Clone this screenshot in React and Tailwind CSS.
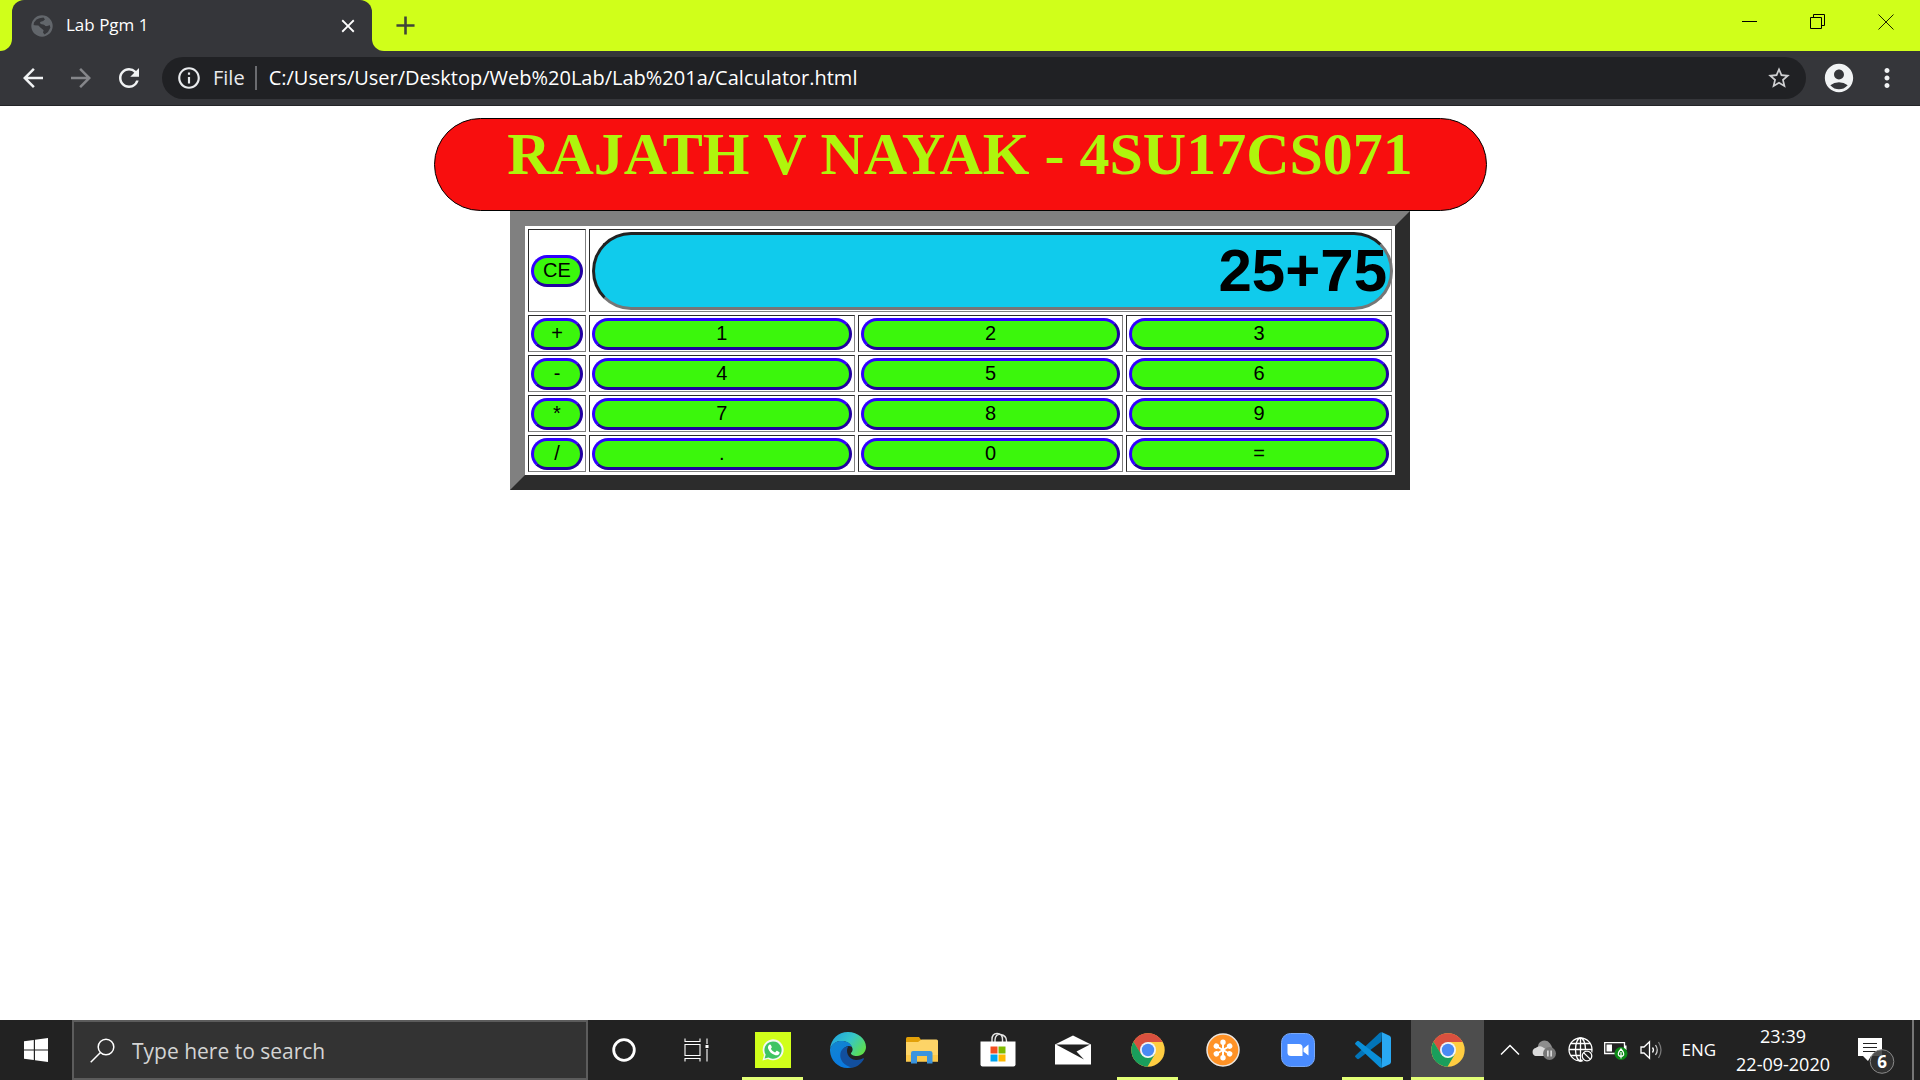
import { useState } from "react";
import {
  MdAccountCircle,
  MdAdd,
  MdArrowBack,
  MdArrowForward,
  MdClose,
  MdInfoOutline,
  MdMoreVert,
  MdRefresh,
  MdStarBorder,
} from "react-icons/md";

function GlobeIcon() {
  return (
    <svg width="22" height="22" viewBox="0 0 22 22" aria-hidden="true">
      <circle cx="11" cy="11" r="10.7" fill="#62666b" />
      <path
        d="M8.5 3.2 12.5 2.4 14 4.5 12 6.2 9.5 7 9.8 9 12.8 9.4 15 11 18.6 10 19.4 12.5 17 17 13.5 19.4 12 17.4 12.6 15.2 10.6 13.6 6.5 13 2.6 10 3 7.6 5.5 4.6Z"
        fill="#35363a"
      />
      <path d="M9 7 12 6.4 14.6 4 18 7.4 18.8 10 15 11.2 12.6 9.3 9.8 9Z" fill="#62666b" />
      <path d="M2.4 10.2 7.4 10.6 10.4 13.4 10 16 8.2 19.4 4.4 17 2.2 13Z" fill="#62666b" />
    </svg>
  );
}

function WindowControls() {
  return (
    <div className="ml-auto flex h-[43px]">
      <button aria-label="Minimize" className="flex w-[68px] items-center justify-center">
        <svg width="16" height="16" viewBox="0 0 16 16">
          <path d="M0 7.5H15" stroke="#000" strokeWidth="1" />
        </svg>
      </button>
      <button aria-label="Restore" className="flex w-[68px] items-center justify-center">
        <svg width="16" height="16" viewBox="0 0 16 16" fill="none" stroke="#000">
          <path d="M.5 3.500H11.500V14.500H.5ZM3.500 3.500V.5H14.500V11.500H11.500" />
        </svg>
      </button>
      <button aria-label="Close window" className="flex w-[68px] items-center justify-center">
        <svg width="16" height="16" viewBox="0 0 16 16">
          <path d="M.5.5 15.500 15.500M15.500.5.5 15.500" stroke="#1c2200" strokeWidth="1" />
        </svg>
      </button>
    </div>
  );
}

function BrowserChrome() {
  return (
    <header className="bg-[#35363a] font-['Open_Sans','Noto_Sans',sans-serif]">
      <div className="flex h-[51px]">
        <div className="w-3 rounded-br-xl bg-[#d0ff1a]" />
        <div className="w-[360px] bg-[#d0ff1a]">
          <div className="flex h-full items-center rounded-t-xl bg-[#35363a] pr-[13px] pl-[19px] text-white">
            <GlobeIcon />
            <span className="ml-[13px] flex-1 pb-0.5 text-[17px]">Lab Pgm 1</span>
            <button aria-label="Close tab">
              <MdClose size={22} />
            </button>
          </div>
        </div>
        <div className="flex flex-1 rounded-bl-xl bg-[#d0ff1a]">
          <button aria-label="New tab" className="ml-[18px] text-[#3f4538]">
            <MdAdd size={31} />
          </button>
          <WindowControls />
        </div>
      </div>
      <div className="flex h-[55px] items-center border-b border-[#232427] pb-px text-[#f1f3f4]">
        <nav className="flex w-[162px] items-center pl-[18px]">
          <button aria-label="Back">
            <MdArrowBack size={30} />
          </button>
          <button aria-label="Forward" className="ml-[18px] text-[#85868a]">
            <MdArrowForward size={30} />
          </button>
          <button aria-label="Reload" className="ml-[18px]">
            <MdRefresh size={30} />
          </button>
        </nav>
        <div className="flex h-[42px] flex-1 items-center rounded-full bg-[#202124] pr-3.5 pl-[14px]">
          <MdInfoOutline size={26} className="text-[#e8eaed]" />
          <label htmlFor="address" className="ml-[11px] text-[20px] text-[#e8eaed]">
            File
          </label>
          <span className="ml-2.5 h-6 w-0.5 bg-[#6b6c70]" />
          <input
            id="address"
            type="text"
            defaultValue="C:/Users/User/Desktop/Web%20Lab/Lab%201a/Calculator.html"
            className="ml-3 min-w-0 flex-1 bg-transparent text-[20px] text-white outline-none"
          />
          <button aria-label="Bookmark this page" className="text-[#cfd0d2]">
            <MdStarBorder size={26} />
          </button>
        </div>
        <button aria-label="Profile" className="ml-4">
          <MdAccountCircle size={34} />
        </button>
        <button aria-label="Menu" className="mr-[18px] ml-4">
          <MdMoreVert size={30} />
        </button>
      </div>
    </header>
  );
}

const keyRows = [
  ["+", "1", "2", "3"],
  ["-", "4", "5", "6"],
  ["*", "7", "8", "9"],
  ["/", ".", "0", "="],
];

const cell =
  "border border-t-[#2c2c2c] border-l-[#2c2c2c] border-r-[#808080] border-b-[#808080] p-[2px] pb-px";

function Key({ label, onPress }) {
  return (
    <button
      onClick={() => onPress(label)}
      className="block h-8 w-full rounded-2xl border-3 border-t-[#3000ff] border-r-[#2000a0] border-b-[#2000a0] border-l-[#3000ff] bg-[#3bf70c] pb-0.5 text-[20px] leading-[24px] text-black"
    >
      {label}
    </button>
  );
}

function Calculator() {
  const [value, setValue] = useState("25+75");
  const press = (label) => {
    if (label === "CE") setValue("");
    else if (label !== "=") setValue(value + label);
  };
  return (
    <main className="flex flex-1 flex-col items-center bg-white pt-3">
      <h1 className="h-[93px] w-full max-w-[1053px] rounded-full border border-black bg-[#f80e0e] text-center font-['Liberation_Serif',serif] text-[60px] leading-[71px] font-bold text-[#aff50c]">
        RAJATH V NAYAK - 4SU17CS071
      </h1>
      <table className="w-full max-w-[900px] table-fixed border-separate border-spacing-[3px] border-[15px] border-t-[#808080] border-r-[#2c2c2c] border-b-[#2c2c2c] border-l-[#808080] font-['Liberation_Sans',sans-serif]">
        <colgroup>
          <col className="w-[58px]" />
          <col />
          <col />
          <col />
        </colgroup>
        <tbody>
          <tr>
            <td className={cell}>
              <Key label="CE" onPress={press} />
            </td>
            <td colSpan={3} className={cell}>
              <input
                type="text"
                aria-label="Result"
                readOnly
                value={value}
                className="block h-[78px] w-[calc(100%+4px)] rounded-full border-3 border-t-[#222222] border-r-[#767676] border-b-[#767676] border-l-[#222222] bg-[#10cbec] pr-[3px] pb-0.5 text-right text-[60px] leading-[69px] font-bold text-black outline-none"
              />
            </td>
          </tr>
          {keyRows.map((row) => (
            <tr key={row[0]}>
              {row.map((label) => (
                <td key={label} className={cell}>
                  <Key label={label} onPress={press} />
                </td>
              ))}
            </tr>
          ))}
        </tbody>
      </table>
    </main>
  );
}

function WhatsAppIcon() {
  return (
    <svg width="36" height="36" viewBox="0 0 36 36">
      <rect width="36" height="36" fill="#d0ff1a" />
      <path d="M7.500 28.500 9 23A10.500 10.500 0 1 1 13 27Z" fill="#f4f7f2" />
      <path d="M9.600 26.500 10.700 22.600A8.600 8.600 0 1 1 13.500 25.400Z" fill="#3fc463" />
      <path
        d="M14.300 12.800c.7-.5 1.400-.3 1.700.4l.8 1.800c.1.400 0 .7-.9 1.700.9 1.800 2.300 3 4.200 3.700l1.300-1.300c.3-.3.600-.3 1-.1l1.700.9c.6.300.6.700.3 1.500-.7 1.700-2.700 2.200-4.500 1.600-3.200-1-5.600-3.300-6.700-6.300-.5-1.700 0-3 1.100-3.900Z"
        fill="#fff"
      />
    </svg>
  );
}

function EdgeIcon() {
  return (
    <svg width="36" height="36" viewBox="0 0 36 36">
      <defs>
        <linearGradient id="edgeTop" x1="0" y1=".2" x2="1" y2=".7">
          <stop offset="0" stopColor="#1fa3e0" />
          <stop offset=".5" stopColor="#36c6c8" />
          <stop offset="1" stopColor="#5fdf4a" />
        </linearGradient>
        <linearGradient id="edgeSide" x1="0" y1="0" x2=".4" y2="1">
          <stop offset="0" stopColor="#1286cf" />
          <stop offset="1" stopColor="#0a7ae0" />
        </linearGradient>
      </defs>
      <path
        d="M0 17C1 7 8 0 18 0s18 7 18 15c0 5-4 9-9 9-4 0-6.500-1.500-6-3 1.500-1.500 1.800-3 1.500-4.500C21.500 12 17 9 11.500 9 6 9 2 12 0 17Z"
        fill="url(#edgeTop)"
      />
      <path
        d="M0 17C2 11.500 6 9 11.500 9c5 0 9 2 10.500 6-3-2-7-.8-9 2.500-3 6 .5 14.500 9.500 17.800C10 38.500-.5 29 0 17Z"
        fill="url(#edgeSide)"
      />
      <path
        d="M18.500 14.500C15 18 17.500 27.500 26 28c3 .1 5-.6 7-1.700.8-.3 1.200.3.8 1C31 32 27 35 22.500 35.700 14 34 9 27.500 10.500 21c1-4 4.500-6.500 8-6.500Z"
        fill="#124f9e"
      />
    </svg>
  );
}

function FolderIcon() {
  return (
    <svg width="33" height="27" viewBox="0 0 33 27">
      <path d="M0 1.500Q0 0 1.500 0H13L15.500 3.500 13 6H0Z" fill="#e2a008" />
      <path d="M0 5H12L15.500 2.500H30.500Q32 2.500 32 4V24.500H0Z" fill="#fdd467" />
      <path d="M0 18H32V24.500H0Z" fill="#fcc848" />
      <path d="M5 26.500V16Q5 14 7 14H24Q26.500 14 26.500 16V26.500H21V19H11V26.500Z" fill="#3b94de" />
    </svg>
  );
}

function StoreIcon() {
  return (
    <svg width="36" height="36" viewBox="0 0 36 36">
      <path
        d="M12 11V7.500C12 3.500 14 1.500 17 1.500S22.500 3.500 22.500 7.500V11M15 11V8C15 4 17.500 2 20.500 2.500S26.500 4.500 26.500 9V11"
        fill="none"
        stroke="#e4e4e4"
        strokeWidth="1.400"
      />
      <path d="M.5 9.500H35.500V32.500Q35.500 34.500 33.500 34.500H2.500Q.5 34.500.5 32.500Z" fill="#fff" />
      <path d="M10.500 14.500H17.500V21.500H10.500Z" fill="#f25022" />
      <path d="M18.500 14.500H25.500V21.500H18.500Z" fill="#7fba00" />
      <path d="M10.500 22.500H17.500V29.500H10.500Z" fill="#00a4ef" />
      <path d="M18.500 22.500H25.500V29.500H18.500Z" fill="#ffb900" />
    </svg>
  );
}

function MailIcon() {
  return (
    <svg width="36" height="30" viewBox="0 0 36 30">
      <path d="M0 9.500 18 .5 36 9.500V29.500H0Z" fill="#fff" />
      <path d="M1 9.500H35L21.500 16.500 29 24.500Z" fill="#222" />
    </svg>
  );
}

function ChromeIcon() {
  return (
    <svg width="34" height="34" viewBox="0 0 34 34">
      <circle cx="17" cy="17" r="16.700" fill="#ffcd41" />
      <path d="M2.500 8.700A16.700 16.700 0 0 1 31.600 9H17L9.800 21.200Z" fill="#d9503f" />
      <path d="M2.500 8.700A16.700 16.700 0 0 0 16.500 33.700L24 21 17 25 10 21.100Z" fill="#1a9e5c" />
      <circle cx="17" cy="17" r="8" fill="#f1f4f8" />
      <circle cx="17" cy="17" r="6.200" fill="#4a8af4" />
    </svg>
  );
}

function AsteriskIcon() {
  return (
    <svg width="34" height="34" viewBox="0 0 34 34">
      <circle cx="17" cy="17" r="16" fill="#ff9226" stroke="#ece6e0" strokeWidth="1.500" />
      <g fill="#fff" stroke="#fff" strokeWidth="2">
        {[0, 60, 120, 180, 240, 300].map((angle) => (
          <g key={angle} transform={`rotate(${angle} 17 17)`}>
            <path d="M17 17V9" />
            <circle cx="17" cy="9.300" r="1.700" />
          </g>
        ))}
      </g>
    </svg>
  );
}

function ZoomIcon() {
  return (
    <svg width="34" height="34" viewBox="0 0 34 34">
      <rect x=".5" y=".5" width="33" height="33" rx="9" fill="#4a8cff" stroke="#7aa9f5" />
      <path d="M6.500 11H18Q21.500 11 21.500 14.500V23H10Q6.500 23 6.500 19.500Z" fill="#fff" />
      <path d="M22.500 15.500 27.500 11.500V22.500L22.500 18.700Z" fill="#fff" />
    </svg>
  );
}

function CodeIcon() {
  return (
    <svg width="36" height="36" viewBox="0 0 36 36">
      <path d="M26.500 9.500 4 26.800Q3 27.500 2 26.700L.5 25.300Q-.4 24.400.5 23.400L24.500 1Q25.600 0 27 .3Z" fill="#0274b8" />
      <path d="M26.500 26.500 4 9.200Q3 8.500 2 9.300L.5 10.700Q-.4 11.600.5 12.600L24.500 35Q25.600 36 27 35.700Z" fill="#0a8fd8" />
      <path d="M27 .2 34.600 3.800Q36 4.600 36 6V30Q36 31.400 34.600 32.200L27 35.800Z" fill="#29a8f2" />
    </svg>
  );
}

const apps = [
  { name: "WhatsApp", Icon: WhatsAppIcon, running: true },
  { name: "Edge", Icon: EdgeIcon },
  { name: "File Explorer", Icon: FolderIcon },
  { name: "Store", Icon: StoreIcon },
  { name: "Mail", Icon: MailIcon },
  { name: "Chrome", Icon: ChromeIcon, running: true },
  { name: "Meeting", Icon: AsteriskIcon },
  { name: "Zoom", Icon: ZoomIcon },
  { name: "Code", Icon: CodeIcon, running: true },
  { name: "Chrome, active", Icon: ChromeIcon, running: true, active: true },
];

function TaskButton({ app }) {
  const { name, Icon, running, active } = app;
  return (
    <button
      aria-label={name}
      className={`flex w-[75px] flex-col items-center ${active ? "px-px" : "px-[7px]"}`}
    >
      <span className={`flex w-full flex-1 items-center justify-center pt-[3px] ${active ? "bg-[#4d4d4d]" : ""}`}>
        <Icon />
      </span>
      <span className={`h-[3px] w-full ${running ? "bg-[#e3ff76]" : ""}`} />
    </button>
  );
}

function Tray() {
  return (
    <div className="ml-auto flex h-full items-center text-white">
      <svg width="20" height="12" viewBox="0 0 20 12" className="mr-[11px]">
        <path d="M1 10.500 10 1.500 19 10.500" fill="none" stroke="#fff" strokeWidth="1.500" />
      </svg>
      <svg width="26" height="22" viewBox="0 0 26 22" className="mr-[11px]">
        <path d="M7 8A6.500 6.500 0 0 1 19 4.500Q22 8 22 14H8Z" fill="#8d8d8d" />
        <path d="M4.500 17A4.200 4.200 0 0 1 4.500 9Q9 5.500 13 9L18 12V17Z" fill="#dadada" />
        <circle cx="18.500" cy="14.500" r="6.500" fill="#777" />
        <path d="M16.900 11.500V17.500M20.100 11.500V17.500" stroke="#fff" strokeWidth="1.200" />
      </svg>
      <svg width="26" height="26" viewBox="0 0 26 26" fill="none" stroke="#fff" strokeWidth="1.300" className="mr-2.5">
        <circle cx="12.500" cy="12.500" r="11.500" />
        <ellipse cx="12.500" cy="12.500" rx="5" ry="11.500" />
        <path d="M1 12.500H24M12.500 1V24M3 6.500H22M3 18.500H16" />
        <circle cx="19" cy="19" r="6" fill="#222" stroke="none" />
        <circle cx="19" cy="19" r="4.800" />
        <path d="M15.600 15.600 22.400 22.400" />
      </svg>
      <svg width="24" height="20" viewBox="0 0 24 20" className="mr-3">
        <path d="M.7 2.700H20.500V13.500H.7Z" fill="none" stroke="#fff" strokeWidth="1.300" />
        <path d="M2.500 4.500H8V11.500H2.500ZM21 5.500H22.500V10H21Z" fill="#fff" />
        <circle cx="17" cy="13.500" r="6.500" fill="#0b8a16" />
        <path d="M17 9Q13.500 13 14.500 15.200 15.500 16.500 17 16.500 18.500 16.500 19.500 15.200 20.500 13 17 9ZM17 12V18.500" fill="none" stroke="#fff" strokeWidth="1.200" />
      </svg>
      <svg width="24" height="20" viewBox="0 0 24 20" fill="none" stroke="#fff" strokeWidth="1.300" className="mr-[17px]">
        <path d="M1 7H4L9.500 1.700V18.300L4 13H1Z" />
        <path d="M12.500 7.500Q14.500 10 12.500 12.500" />
        <path d="M15.500 5Q19 10 15.500 15" stroke="#ccc" />
        <path d="M18.500 2Q23.500 10 18.500 18" stroke="#777" />
      </svg>
      <span className="mr-5 text-[17px]">ENG</span>
      <div className="flex flex-col items-center text-[18px] leading-[28px]">
        <span>23:39</span>
        <span>22-09-2020</span>
      </div>
      <button aria-label="Notifications, 6 new" className="relative ml-[28px] h-12 w-[37px]">
        <svg width="37" height="48" viewBox="0 0 37 48">
          <path d="M0 12H24V30H13L10 35 5 30H0Z" fill="#fff" />
          <path d="M5 17.500H19M5 21.500H19M5 25.500H19" stroke="#222" strokeWidth="1.200" />
          <circle cx="24" cy="35.500" r="11.800" fill="#333332" fillOpacity=".85" stroke="#8a8a8a" />
        </svg>
        <span className="absolute top-6 left-3 w-6 text-center text-[17px] leading-[23px] font-bold">6</span>
      </button>
      <span className="ml-[17px] h-full w-0.5 bg-[#767676]" />
      <span className="w-[6px]" />
    </div>
  );
}

function Taskbar() {
  return (
    <footer className="flex h-[60px] bg-[#222222] font-['Open_Sans','Noto_Sans',sans-serif]">
      <button aria-label="Start" className="flex w-[72px] items-center justify-center">
        <svg width="24" height="24" viewBox="0 0 24 24" fill="#fff">
          <path d="M0 3.300 9.800 2V11.400H0ZM11 1.800 24 0V11.400H11ZM0 12.600H9.800V22L0 20.700ZM11 12.600H24V24L11 22.200Z" />
        </svg>
      </button>
      <label className="flex w-[516px] items-center border-2 border-[#5c5c5c] bg-[#333333] pl-4">
        <svg width="25" height="25" viewBox="0 0 25 25" fill="none" stroke="#fff" strokeWidth="1.500">
          <circle cx="16" cy="9" r="7.800" />
          <path d="M10.500 14.500.7 24.300" />
        </svg>
        <input
          type="text"
          aria-label="Search"
          placeholder="Type here to search"
          className="ml-[17px] min-w-0 flex-1 bg-transparent pt-[3px] text-[21px] text-white outline-none placeholder:text-[#d4d4d4]"
        />
      </label>
      <button aria-label="Cortana" className="flex w-[72px] items-center justify-center">
        <svg width="24" height="24" viewBox="0 0 24 24">
          <circle cx="12" cy="12" r="10.300" fill="none" stroke="#fff" strokeWidth="2.800" />
        </svg>
      </button>
      <button aria-label="Task view" className="mr-[3px] flex w-[72px] items-center justify-center">
        <svg width="25" height="24" viewBox="0 0 25 24" fill="none" stroke="#fff" strokeWidth="1.100">
          <path d="M1 .5V3.500H16V.5M1 6.500H16V17.500H1ZM1 23.500V20.500H16V23.500M23 .5V6M23 11V23.500" />
          <path d="M21.500 7H24.500V10H21.500Z" fill="#fff" stroke="none" />
        </svg>
      </button>
      {apps.map((app) => (
        <TaskButton key={app.name} app={app} />
      ))}
      <Tray />
    </footer>
  );
}

export default function App() {
  return (
    <div className="flex min-h-screen flex-col">
      <BrowserChrome />
      <Calculator />
      <Taskbar />
    </div>
  );
}
